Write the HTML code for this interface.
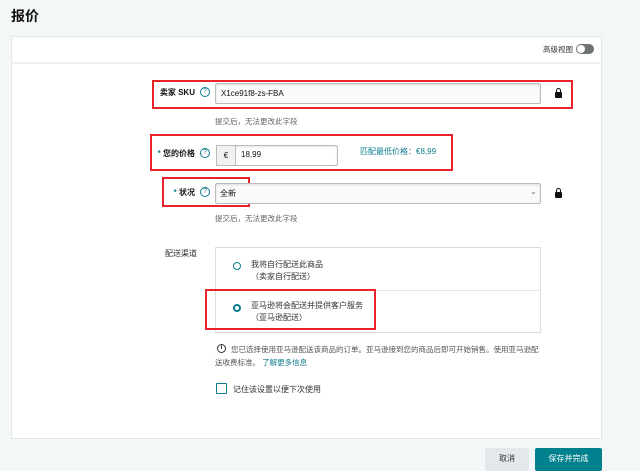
<!DOCTYPE html>
<html><head><meta charset="utf-8"><style>
*{box-sizing:border-box;margin:0;padding:0}
body{width:640px;height:471px;background:#f4f7f8;font-family:"Liberation Sans","Noto Sans CJK SC",sans-serif;font-size:8px;color:#111;position:relative;overflow:hidden}
.a{position:absolute}
.card{left:11px;top:36px;width:591px;height:403px;background:#fff;border:1px solid #e3e6e6}
.hdr{left:11px;top:62px;width:591px;height:2px;background:#eee}
.inp{position:absolute;border:1px solid #bbb;background:#fff;border-radius:2px;box-shadow:inset 0 1px 2px rgba(0,0,0,.12)}
.red{position:absolute;border:2px solid #e8232a}
.q{position:absolute;width:10px;height:10px;border:1px solid #0e7d8c;border-radius:50%;color:#0e7d8c;font-size:7px;line-height:8px;text-align:center}
.lock{position:absolute;width:7px;height:6px;background:#111;border-radius:1px}
.lock:before{content:"";position:absolute;left:1px;top:-4px;width:5px;height:5px;border:1.2px solid #111;border-bottom:none;border-radius:3px 3px 0 0;box-sizing:border-box}
.hint{color:#666;font-size:7.5px}
.lbl{position:absolute;right:445px;font-weight:bold;white-space:nowrap}
</style></head><body>
<div class="a" style="left:11px;top:6px;font-size:14px;font-weight:bold">报价</div>
<div class="a card"></div>
<div class="a hdr"></div>
<div class="a" style="left:543px;top:44px;font-size:7.5px;color:#333">高级视图</div>
<div class="a" style="left:576px;top:44px;width:18px;height:10px;border-radius:5px;background:#6f7373"></div>
<div class="a" style="left:577px;top:45px;width:8px;height:8px;border-radius:50%;background:#fff"></div>

<div class="red" style="left:152px;top:80px;width:421px;height:29px"></div>
<div class="lbl" style="top:87px">卖家 SKU</div>
<div class="q" style="left:200px;top:87px">?</div>
<div class="inp" style="left:215px;top:83px;width:326px;height:21px;background:#fafafa"></div>
<div class="a" style="left:221px;top:89px">X1ce91f8-zs-FBA</div>
<div class="lock" style="left:555px;top:92px"></div>
<div class="a hint" style="left:215px;top:116px">提交后，无法更改此字段</div>

<div class="red" style="left:150px;top:134px;width:303px;height:37px"></div>
<div class="lbl" style="top:148px"><span style="color:#0e7d8c">*</span> 您的价格</div>
<div class="q" style="left:200px;top:148px">?</div>
<div class="inp" style="left:216px;top:145px;width:122px;height:21px"></div>
<div class="a" style="left:216px;top:145px;width:20px;height:21px;background:#f0f2f2;border:1px solid #bbb;text-align:center;line-height:19px">€</div>
<div class="a" style="left:241px;top:150px">18,99</div>
<div class="a" style="left:360px;top:146px;color:#0e7d8c">匹配最低价格：€8,99</div>

<div class="red" style="left:162px;top:177px;width:88px;height:30px"></div>
<div class="lbl" style="top:187px"><span style="color:#0e7d8c">*</span> 状况</div>
<div class="q" style="left:200px;top:187px">?</div>
<div class="inp" style="left:215px;top:183px;width:326px;height:21px;background:#fafafa"></div>
<div class="a" style="left:220px;top:188px">全新</div>
<div class="a" style="left:530px;top:187px;color:#666;font-size:8px">⌄</div>
<div class="lock" style="left:555px;top:192px"></div>
<div class="a hint" style="left:215px;top:213px">提交后，无法更改此字段</div>

<div class="a" style="left:165px;top:248px;color:#333">配送渠道</div>
<div class="a" style="left:215px;top:247px;width:326px;height:86px;border:1px solid #ddd"></div>
<div class="a" style="left:216px;top:290px;width:324px;height:1px;background:#e5e5e5"></div>
<div class="a" style="left:233px;top:262px;width:8px;height:8px;border:1px solid #0e7d8c;border-radius:50%"></div>
<div class="a" style="left:251px;top:259px;color:#333;line-height:12px">我将自行配送此商品<br>（卖家自行配送）</div>
<div class="a" style="left:233px;top:304px;width:8px;height:8px;border:2.5px solid #0e7d8c;border-radius:50%"></div>
<div class="a" style="left:251px;top:300px;color:#333;line-height:12px">亚马逊将会配送并提供客户服务<br>（亚马逊配送）</div>
<div class="red" style="left:205px;top:289px;width:171px;height:41px"></div>

<div class="a" style="left:217px;top:344px;width:9px;height:9px;border:1px solid #333;border-radius:50%;font-size:6px;text-align:center;line-height:7px;font-weight:bold">i</div>
<div class="a" style="left:215px;top:343px;width:330px;color:#555;line-height:13px;font-size:7.5px;text-indent:16px">您已选择使用亚马逊配送该商品的订单。亚马逊接到您的商品后即可开始销售。使用亚马逊配送收费标准。 <span style="color:#0e7d8c">了解更多信息</span></div>

<div class="a" style="left:216px;top:383px;width:11px;height:11px;border:1px solid #0e7d8c;border-radius:1px"></div>
<div class="a" style="left:233px;top:384px;color:#333">记住该设置以便下次使用</div>

<div class="a" style="left:485px;top:448px;width:44px;height:23px;background:#e3e8ea;border-radius:2px;text-align:center;line-height:22px;color:#333">取消</div>
<div class="a" style="left:535px;top:448px;width:67px;height:23px;background:#00818d;border-radius:2px;text-align:center;line-height:22px;color:#fff">保存并完成</div>
</body></html>
